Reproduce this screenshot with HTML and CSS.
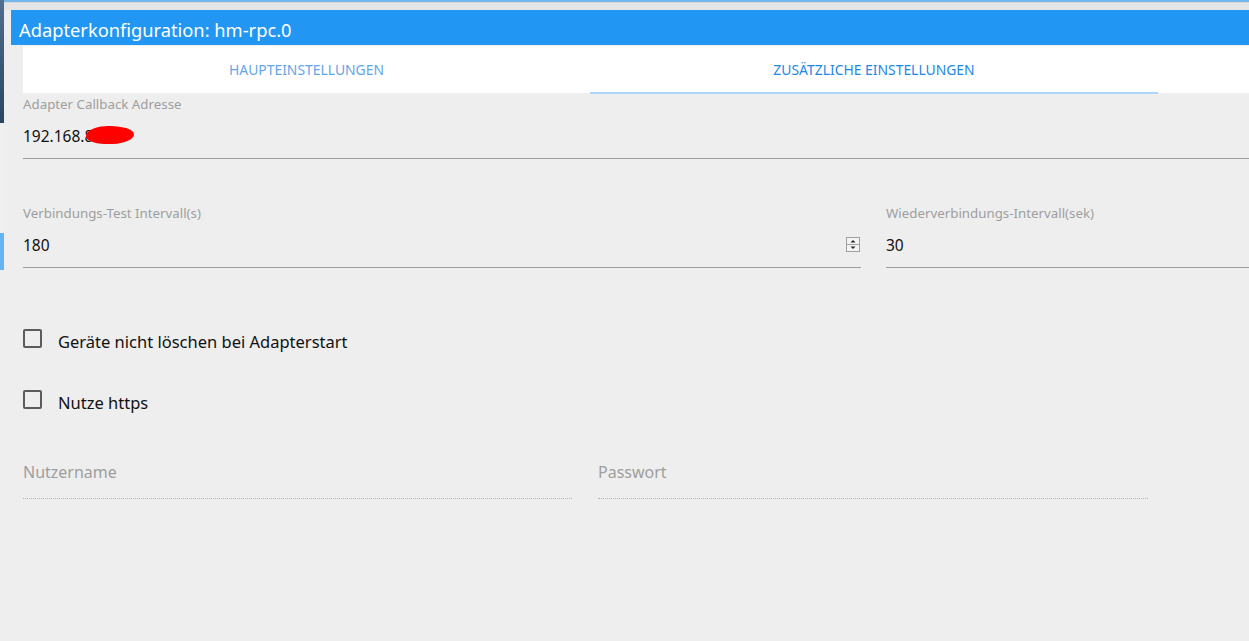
FILE: index.html
```
<!DOCTYPE html>
<html>
<head>
  <title>Adapterkonfiguration: hm-rpc.0</title>
  <link rel="stylesheet" href="styles.css">
</head>
<body>
  <div class="screen">
    <!-- strip of the desktop behind the dialog -->
    <div class="edge">
      <div class="edge-dark"></div>
      <div class="edge-light"></div>
      <div class="edge-blue"></div>
    </div>

    <div class="window">
      <div class="topbar"></div>
      <div class="dialog">
        <div class="title">Adapterkonfiguration: hm-rpc.0</div>

        <div class="content">
          <div class="tabs">
            <div class="tab">HAUPTEINSTELLUNGEN</div>
            <div class="tab active">ZUSÄTZLICHE EINSTELLUNGEN</div>
            <div class="tab-rest"></div>
          </div>

          <div class="field first">
            <label class="label">Adapter Callback Adresse</label>
            <div class="value">192.168.8<span class="redact"></span></div>
          </div>

          <div class="row-two">
            <div class="field">
              <label class="label">Verbindungs-Test Intervall(s)</label>
              <div class="value">
                <span>180</span>
                <svg class="spinner" width="14" height="15" viewBox="0 0 14 15">
                  <rect x="0.5" y="0.5" width="13" height="14" fill="#f4f4f4" stroke="#a0a0a0"/>
                  <line x1="1" y1="7.5" x2="13" y2="7.5" stroke="#a0a0a0"/>
                  <path d="M4.5 5.5 L7 3 L9.5 5.5 Z" fill="#222"/>
                  <path d="M4.5 9.5 L7 12 L9.5 9.5 Z" fill="#222"/>
                </svg>
              </div>
            </div>
            <div class="field">
              <label class="label">Wiederverbindungs-Intervall(sek)</label>
              <div class="value">30</div>
            </div>
          </div>

          <div class="check first-check">
            <span class="box"></span>
            <span class="check-text">Geräte nicht löschen bei Adapterstart</span>
          </div>
          <div class="check">
            <span class="box"></span>
            <span class="check-text">Nutze https</span>
          </div>

          <div class="row-login">
            <div class="login">Nutzername</div>
            <div class="login">Passwort</div>
          </div>
        </div>
      </div>
    </div>
  </div>
</body>
</html>
```

FILE: styles.css
```
html, body {
  margin: 0;
  height: 100%;
  overflow: hidden;
}
body {
  background: #eeeeee;
  font-family: "Noto Sans", "Open Sans", sans-serif;
  color: #111;
}
.screen {
  display: flex;
  height: 641px;
}
.edge {
  width: 4px;
  flex: none;
  display: flex;
  flex-direction: column;
}
.edge-dark {
  height: 123px;
  background: linear-gradient(#4f6f8e, #2a4560);
}
.edge-light {
  height: 110px;
  background: #efefef;
}
.edge-blue {
  height: 37px;
  background: #64b3f2;
}
.window {
  flex: 1;
  min-width: 0;
}
.topbar {
  height: 3px;
  background: #72b8ef;
  border-bottom: 7px solid #e4e4e4;
  box-shadow: inset 0 -1px 0 #d8d8d8;
}
.dialog {
  padding-left: 7px;
}
.title {
  box-sizing: border-box;
  height: 35px;
  line-height: 36px;
  padding-top: 2px;
  padding-left: 8px;
  background: #2196f3;
  color: #fff;
  font-size: 18.3px;
  white-space: nowrap;
}
.content {
  padding-left: 12px;
}
.tabs {
  display: grid;
  grid-template-columns: 567px 568px 1fr;
  height: 47px;
  margin-top: 1px;
  background: #fff;
}
.tab {
  text-align: center;
  line-height: 48px;
  font-size: 13.9px;
  color: #64a6ea;
}
.tab.active {
  color: #1e88e5;
  box-shadow: inset 0 -2px 0 #a9d6fa;
}
.field {
  border-bottom: 1px solid #9e9e9e;
}
.field.first {
  margin-top: 3px;
}
.label {
  display: block;
  height: 16px;
  line-height: 16px;
  font-size: 13.3px;
  color: #9e9e9e;
}
.value {
  height: 46px;
  display: flex;
  align-items: center;
  font-size: 15.5px;
  padding-top: 2px;
  box-sizing: border-box;
}
.redact {
  display: inline-block;
  width: 48px;
  height: 18px;
  margin-left: -7px;
  margin-top: -2px;
  background: #ff0000;
  border-radius: 40% 55% 45% 50% / 55% 50% 50% 45%;
  transform: rotate(-2deg);
}
.row-two {
  display: grid;
  grid-template-columns: 838px 1fr;
  column-gap: 25px;
  margin-top: 46px;
}
.row-two .value {
  justify-content: space-between;
}
.spinner {
  margin-right: 1px;
  margin-top: -1px;
}
.check {
  display: flex;
  align-items: center;
  height: 30px;
  margin-top: 31px;
}
.check.first-check {
  margin-top: 58px;
}
.box {
  width: 15px;
  height: 15px;
  border: 2px solid #5c5c5c;
  border-radius: 2px;
  margin-right: 16px;
  margin-top: -6px;
}
.check-text {
  font-size: 16.5px;
}
.row-login {
  display: grid;
  grid-template-columns: 549px 550px;
  column-gap: 26px;
  margin-top: 43px;
}
.login {
  height: 38px;
  line-height: 24px;
  font-size: 16px;
  color: #9e9e9e;
  border-bottom: 1px dotted #b5b5b5;
}
```
